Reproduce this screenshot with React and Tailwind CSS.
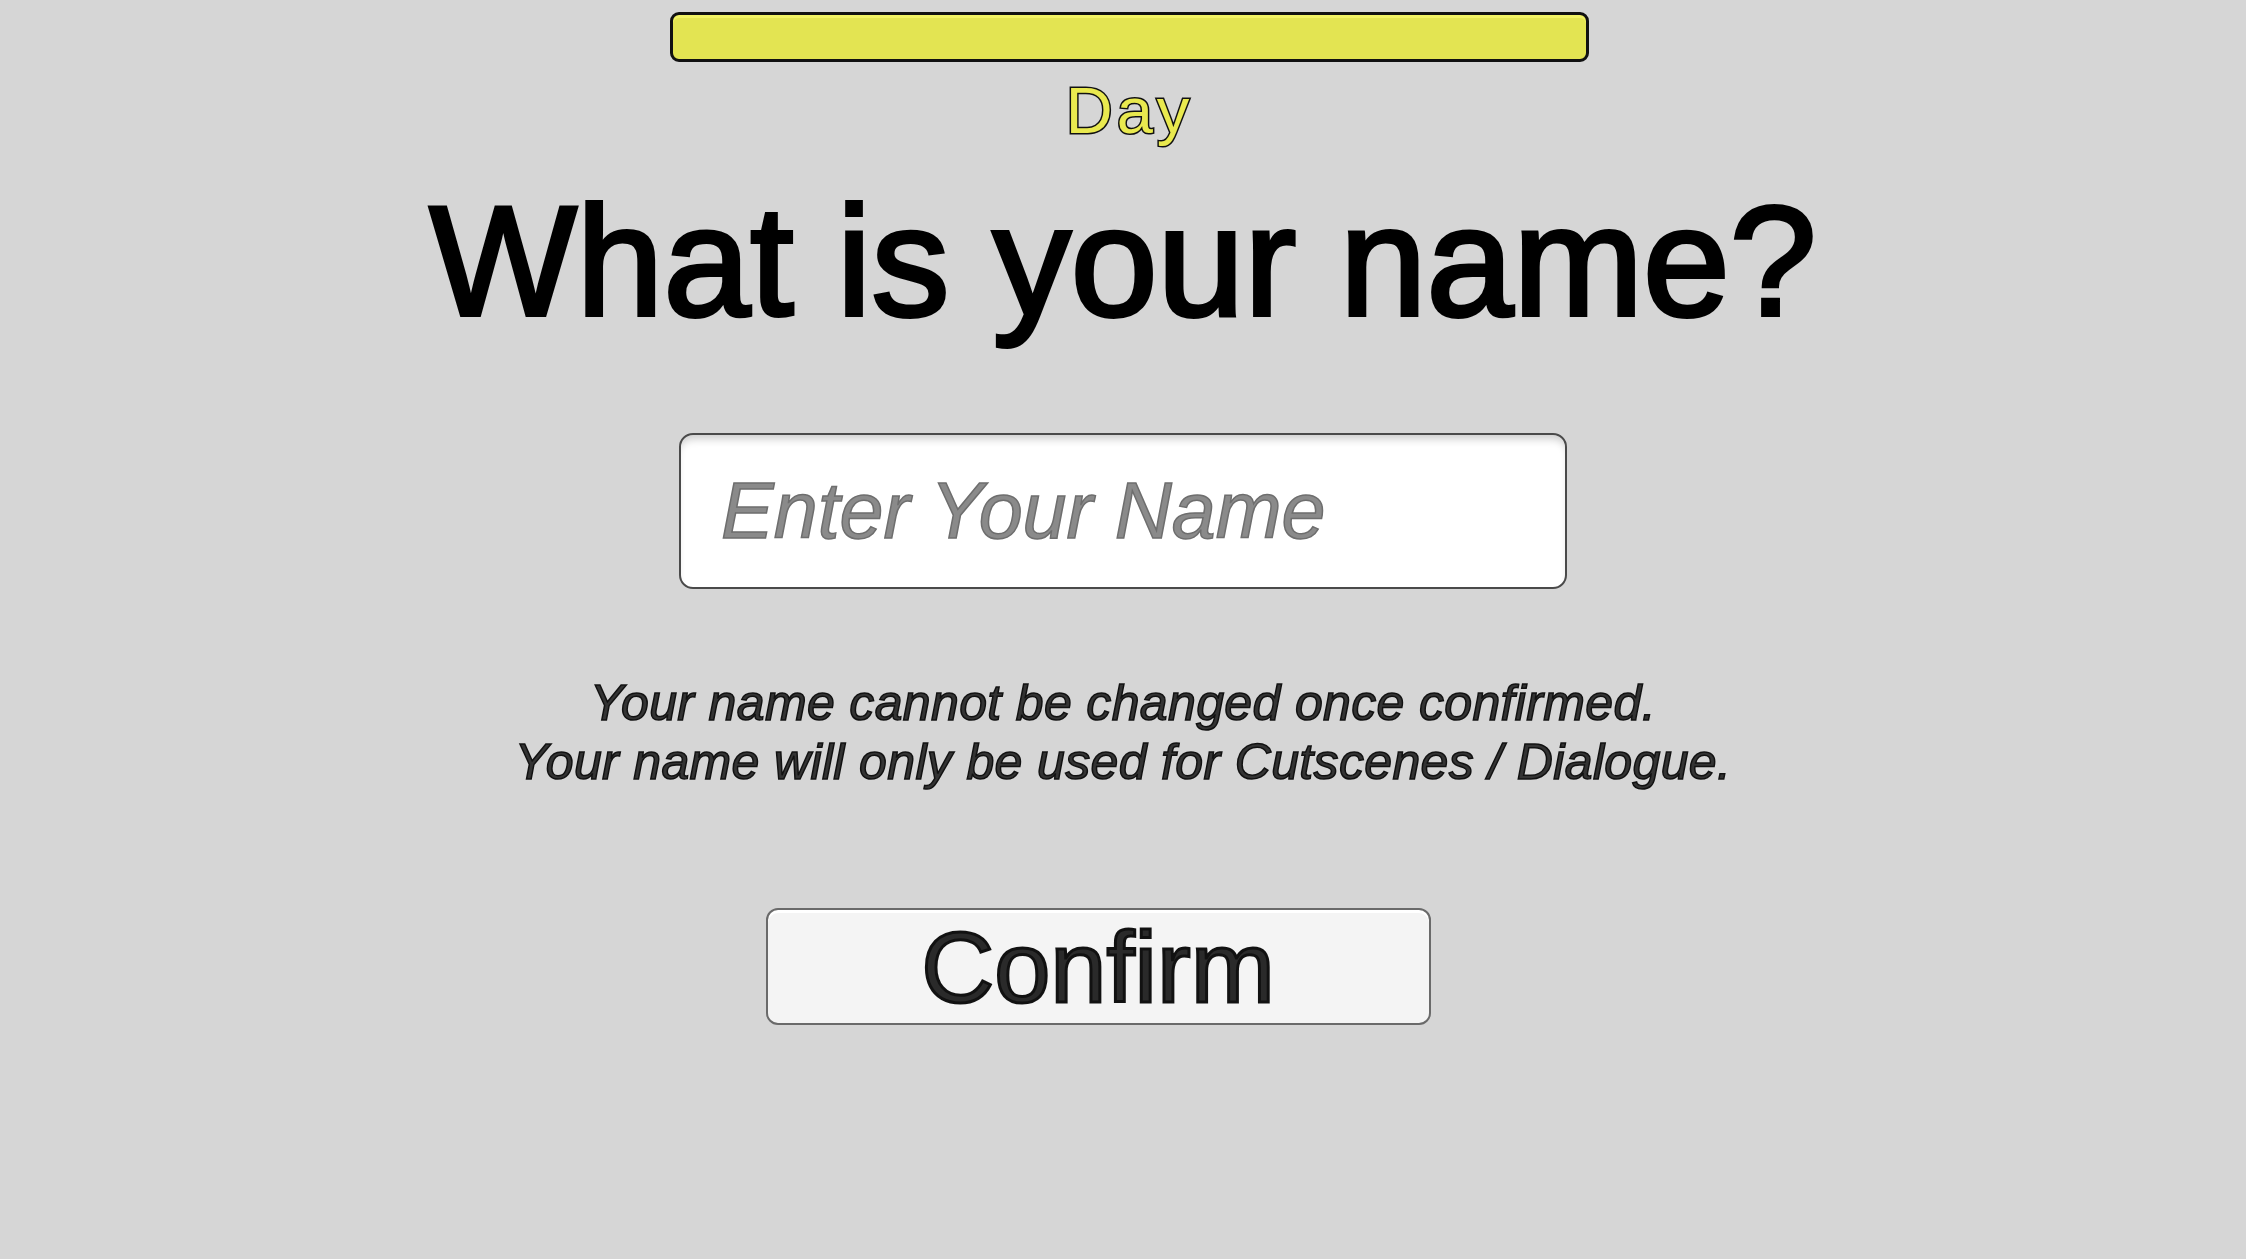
export default function App() {
  return (
    <div className="min-h-screen w-full bg-[#d6d6d6] flex flex-col items-center font-['Liberation_Sans',Arial,sans-serif] overflow-hidden">
      {/* day progress bar */}
      <div className="mt-[12px] ml-[13px] w-[919px] h-[50px] rounded-[9px] border-[3px] border-[#111] bg-[#e3e452] shadow-[inset_0_3px_0_rgba(255,255,120,0.5)]" />

      <div className="mt-[17px] ml-[13px] h-[64px] text-[65px] leading-[64px] tracking-[4px] text-[#e9e94f] [-webkit-text-stroke:3px_#111] [paint-order:stroke_fill]">
        Day
      </div>

      <h1 className="mt-[40px] h-[156px] text-[156px] leading-[156px] font-normal text-black [-webkit-text-stroke:4px_#000] whitespace-nowrap">
        What is your name?
      </h1>

      <input
        type="text"
        placeholder="Enter Your Name"
        className="mt-[94px] w-[888px] h-[156px] shrink-0 rounded-[14px] border-2 border-[#4a4a4a] bg-white pl-[40px] text-[79px] italic text-[#8a8a8a] placeholder:text-[#8a8a8a] [-webkit-text-stroke:1.5px_#6e6e6e] shadow-[inset_0_8px_8px_-4px_rgba(0,0,0,0.2)] outline-none font-['Liberation_Sans',Arial,sans-serif]"
      />

      <div className="mt-[85px] text-center text-[50px] leading-[59px] italic tracking-[0.35px] text-[#333] [-webkit-text-stroke:1.5px_#111] whitespace-nowrap">
        <p>Your name cannot be changed once confirmed.</p>
        <p>Your name will only be used for Cutscenes / Dialogue.</p>
      </div>

      <button className="mt-[116px] mr-[50px] w-[665px] h-[117px] rounded-[12px] border-2 border-[#6a6a6a] bg-[#f4f4f4] shadow-[inset_0_3px_0_#ffffff] flex items-center justify-center">
        <span className="text-[101px] leading-[100px] text-[#2a2a2a] [-webkit-text-stroke:3px_#111] font-['Liberation_Sans',Arial,sans-serif]">
          Confirm
        </span>
      </button>
    </div>
  );
}
